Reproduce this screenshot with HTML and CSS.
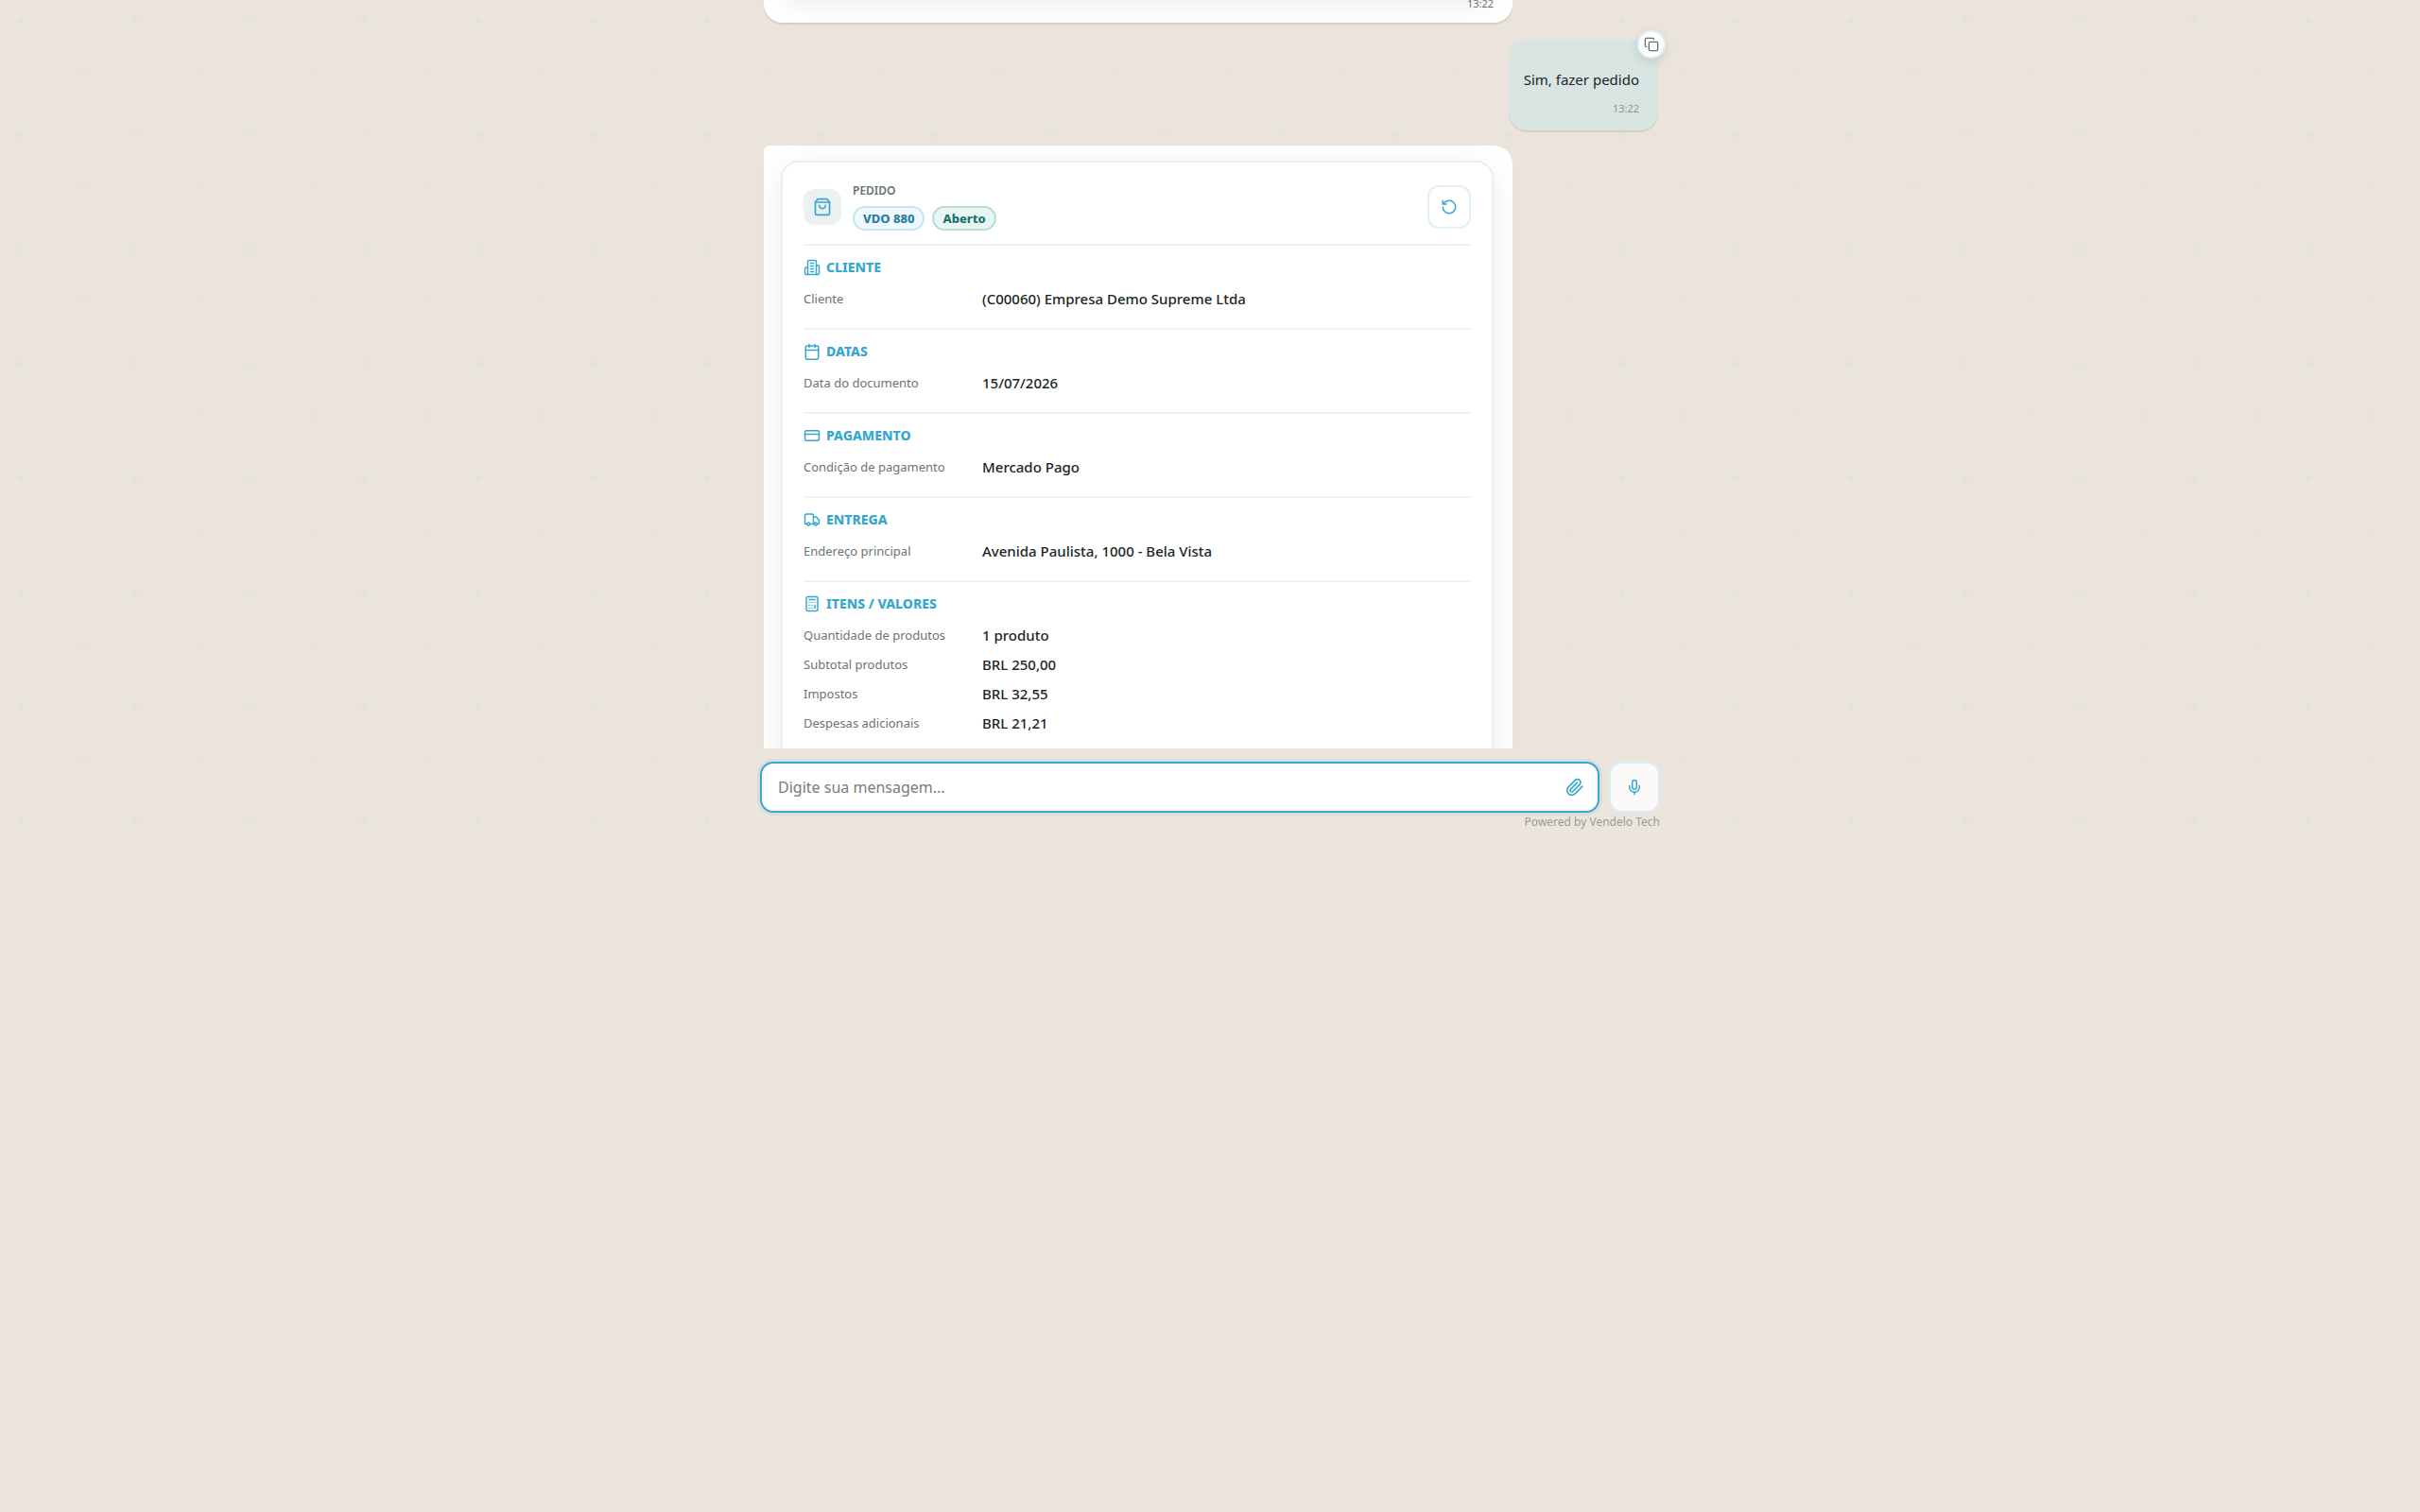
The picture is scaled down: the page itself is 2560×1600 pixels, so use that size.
FILE: index.html
```html
<!DOCTYPE html>
<html lang="pt-BR">
<head>
    <meta charset="UTF-8">
    <meta name="viewport" content="width=device-width, initial-scale=1.0">
    <title>Vendelo Chat</title>
    <link rel="stylesheet" href="styles.css">
</head>
<body>
    <div class="chat">
        <main class="messages">
            <article class="message bot previous">
                <div class="order-card"></div>
                <time class="time">13:22</time>
            </article>

            <article class="message user">
                <button class="copy-btn" type="button" aria-label="Copiar mensagem">
                    <svg class="icon" viewBox="0 0 24 24"><rect x="8" y="8" width="14" height="14" rx="2"/><path d="M4 16c-1.1 0-2-.9-2-2V4c0-1.1.9-2 2-2h10c1.1 0 2 .9 2 2"/></svg>
                </button>
                <p>Sim, fazer pedido</p>
                <time class="time">13:22</time>
            </article>

            <article class="message bot">
                <div class="order-card">
                    <header class="order-header">
                        <span class="order-icon">
                            <svg class="icon" viewBox="0 0 24 24"><path d="M6 2 3 6v14a2 2 0 0 0 2 2h14a2 2 0 0 0 2-2V6l-3-4Z"/><path d="M3 6h18"/><path d="M16 10a4 4 0 0 1-8 0"/></svg>
                        </span>
                        <div class="order-title">
                            <span class="order-label">PEDIDO</span>
                            <div class="badges">
                                <span class="badge">VDO 880</span>
                                <span class="badge status">Aberto</span>
                            </div>
                        </div>
                        <button class="refresh-btn" type="button" aria-label="Atualizar pedido">
                            <svg class="icon" viewBox="0 0 24 24"><path d="M3 12a9 9 0 1 0 9-9 9.750 9.750 0 0 0-6.740 2.740L3 8"/><path d="M3 3v5h5"/></svg>
                        </button>
                    </header>

                    <section class="order-section">
                        <h2>
                            <svg class="icon" viewBox="0 0 24 24"><path d="M6 22V4a2 2 0 0 1 2-2h8a2 2 0 0 1 2 2v18Z"/><path d="M6 12H4a2 2 0 0 0-2 2v6a2 2 0 0 0 2 2h2"/><path d="M18 9h2a2 2 0 0 1 2 2v9a2 2 0 0 1-2 2h-2"/><path d="M10 6h4M10 10h4M10 14h4M10 18h4"/></svg>
                            CLIENTE
                        </h2>
                        <dl>
                            <dt>Cliente</dt>
                            <dd>(C00060) Empresa Demo Supreme Ltda</dd>
                        </dl>
                    </section>

                    <section class="order-section">
                        <h2>
                            <svg class="icon" viewBox="0 0 24 24"><path d="M8 2v4M16 2v4"/><rect x="3" y="4" width="18" height="19" rx="2"/><path d="M3 10h18"/></svg>
                            DATAS
                        </h2>
                        <dl>
                            <dt>Data do documento</dt>
                            <dd>15/07/2026</dd>
                        </dl>
                    </section>

                    <section class="order-section">
                        <h2>
                            <svg class="icon" viewBox="0 0 24 24"><rect x="2" y="5" width="20" height="14" rx="2"/><path d="M2 10h20"/></svg>
                            PAGAMENTO
                        </h2>
                        <dl>
                            <dt>Condição de pagamento</dt>
                            <dd>Mercado Pago</dd>
                        </dl>
                    </section>

                    <section class="order-section">
                        <h2>
                            <svg class="icon" viewBox="0 0 24 24"><path d="M14 18V6a2 2 0 0 0-2-2H4a2 2 0 0 0-2 2v11a1 1 0 0 0 1 1h2"/><path d="M15 18H9"/><path d="M19 18h2a1 1 0 0 0 1-1v-3.650a1 1 0 0 0-.22-.624l-3.480-4.350A1 1 0 0 0 17.520 8H14"/><circle cx="17" cy="18" r="2"/><circle cx="7" cy="18" r="2"/></svg>
                            ENTREGA
                        </h2>
                        <dl>
                            <dt>Endereço principal</dt>
                            <dd>Avenida Paulista, 1000 - Bela Vista</dd>
                        </dl>
                    </section>

                    <section class="order-section">
                        <h2>
                            <svg class="icon" viewBox="0 0 24 24"><rect x="4" y="2" width="16" height="20" rx="2"/><path d="M8 6h8M16 14v4M16 10h.01M12 10h.01M8 10h.01M12 14h.01M8 14h.01M12 18h.01M8 18h.01"/></svg>
                            ITENS / VALORES
                        </h2>
                        <dl>
                            <dt>Quantidade de produtos</dt>
                            <dd>1 produto</dd>
                            <dt>Subtotal produtos</dt>
                            <dd>BRL 250,00</dd>
                            <dt>Impostos</dt>
                            <dd>BRL 32,55</dd>
                            <dt>Despesas adicionais</dt>
                            <dd>BRL 21,21</dd>
                        </dl>
                    </section>
                </div>
            </article>
        </main>

        <footer class="composer">
            <form class="composer-row">
                <div class="input-box">
                    <input type="text" placeholder="Digite sua mensagem..." aria-label="Mensagem">
                    <button class="attach-btn" type="button" aria-label="Anexar arquivo">
                        <svg class="icon" viewBox="0 0 24 24"><path d="m21.440 11.050-9.190 9.190a6 6 0 0 1-8.490-8.490l8.570-8.570A4 4 0 1 1 18 8.840l-8.590 8.570a2 2 0 0 1-2.830-2.830l8.490-8.480"/></svg>
                    </button>
                </div>
                <button class="mic-btn" type="button" aria-label="Gravar áudio">
                    <svg class="icon" viewBox="0 0 24 24"><path d="M12 2a3 3 0 0 0-3 3v7a3 3 0 0 0 6 0V5a3 3 0 0 0-3-3Z"/><path d="M19 10v2a7 7 0 0 1-14 0v-2"/><path d="M12 19v3"/></svg>
                </button>
            </form>
            <p class="powered">Powered by Vendelo Tech</p>
        </footer>
    </div>
</body>
</html>
```
FILE: styles.css
```css
* {
    box-sizing: border-box;
}

body {
    margin: 0;
    min-height: 100vh;
    background-color: #ebe4dd;
    font-family: "Segoe UI", "Noto Sans", "Open Sans", sans-serif;
    color: #1c2624;
}

p, h2, dl, dd {
    margin: 0;
}

button {
    display: flex;
    align-items: center;
    justify-content: center;
    padding: 0;
    cursor: pointer;
}

.icon {
    display: block;
    flex: none;
    width: 18px;
    height: 18px;
    fill: none;
    stroke: currentColor;
    stroke-width: 2;
    stroke-linecap: round;
    stroke-linejoin: round;
}

/* dotted wallpaper */
.chat {
    display: flex;
    flex-direction: column;
    height: 55vh;
    background-image:
        radial-gradient(circle at 22px 22px, #dfe3dc 2px, transparent 3px),
        radial-gradient(circle at 88px 77px, #e4e4dd 2px, transparent 3px);
    background-size: 121px 121px;
}

.messages {
    flex: 1;
    min-height: 0;
    width: 100%;
    max-width: 980px;
    margin: 0 auto;
    padding: 0 16px 0 18px;
    display: flex;
    flex-direction: column;
    overflow: hidden;
}

.message {
    flex: none;
    display: flex;
    flex-direction: column;
    border-radius: 20px;
    box-shadow: 0 2px 1px rgba(90, 80, 50, 0.14);
}

.message.bot {
    width: 100%;
    max-width: 792px;
    padding: 16px 20px 16px 18px;
    border-top-left-radius: 6px;
    background-color: #fff;
}

/* scrolled almost out of view */
.message.previous {
    margin-top: -80px;
    padding-bottom: 12px;
}

.message.previous .order-card {
    height: 60px;
}

.message.user {
    position: relative;
    align-self: flex-end;
    margin: 18px 0 16px;
    padding: 31px 20px 15px 16px;
    background-color: #d8e5e2;
}

.message.user p {
    font-size: 15px;
    line-height: 22px;
}

.message.user .time {
    margin-top: 12px;
    color: #8b9693;
}

.time {
    align-self: flex-end;
    font-size: 11px;
    line-height: 16px;
    color: #69716e;
}

.copy-btn {
    position: absolute;
    top: -10px;
    right: -8px;
    width: 30px;
    height: 30px;
    border: 2px solid #e3f1f7;
    border-radius: 50%;
    background-color: #fff;
    color: #66736c;
    box-shadow: 0 4px 12px rgba(0, 0, 0, 0.1);
}

.copy-btn .icon {
    width: 16px;
    height: 16px;
}

.order-card {
    padding: 0 22px 28px;
    border: 2px solid #e3f2f9;
    border-radius: 18px;
    background-color: #fff;
    box-shadow: 0 8px 32px rgba(0, 0, 0, 0.08);
}

.order-header {
    display: flex;
    align-items: center;
    gap: 12px;
    height: 86px;
    padding: 22px 0 14px;
}

.order-icon {
    display: flex;
    align-items: center;
    justify-content: center;
    width: 40px;
    height: 38px;
    border-radius: 12px;
    background-color: #eaf1f0;
    color: #38a6cf;
}

.order-icon .icon {
    width: 20px;
    height: 20px;
}

.order-title {
    flex: 1;
}

.order-label {
    display: block;
    font-size: 12px;
    line-height: 16px;
    font-weight: 600;
    color: #66736c;
}

.badges {
    display: flex;
    gap: 8px;
    margin-top: 8px;
}

.badge {
    height: 26px;
    padding: 0 9px;
    border: 2px solid #c5e4ef;
    border-radius: 13px;
    background-color: #eff8fc;
    font-size: 13px;
    line-height: 22px;
    font-weight: 800;
    color: #2a7ea5;
}

.badge.status {
    border-color: #b8dcd6;
    background-color: #e9f5f3;
    color: #17746a;
}

.refresh-btn {
    width: 46px;
    height: 46px;
    border: 2px solid #e0f0f7;
    border-radius: 12px;
    background-color: #fff;
    color: #38a6cf;
}

.order-section {
    padding: 12px 0 20px;
    border-top: 2px solid #ebf5f9;
}

.order-section h2 {
    display: flex;
    align-items: center;
    gap: 6px;
    font-size: 14px;
    line-height: 22px;
    font-weight: 800;
    color: #38a6cf;
}

.order-section dl {
    display: grid;
    grid-template-columns: 177px 1fr;
    column-gap: 12px;
    row-gap: 9px;
    margin-top: 11px;
    line-height: 22px;
}

.order-section dt {
    font-size: 13px;
    color: #6b7471;
}

.order-section dd {
    font-size: 15px;
    font-weight: 500;
}

.composer {
    flex: none;
    width: 100%;
    max-width: 980px;
    margin: 0 auto;
    padding: 14px 14px 0;
    background-color: #ece5de;
}

.composer-row {
    display: flex;
    gap: 10px;
}

.input-box {
    flex: 1;
    display: flex;
    align-items: center;
    height: 54px;
    padding: 0 14px 0 17px;
    border: 2px solid #38a6cf;
    border-radius: 14px;
    background-color: #fff;
    box-shadow: 0 0 0 3px #d8dedb;
}

.input-box input {
    flex: 1;
    min-width: 0;
    padding: 0;
    border: none;
    outline: none;
    background: none;
    font-family: inherit;
    font-size: 16px;
    color: #1c2624;
}

.input-box input::placeholder {
    color: #7b7b7b;
}

.attach-btn {
    border: none;
    background: none;
    color: #38a6cf;
}

.attach-btn .icon {
    width: 20px;
    height: 20px;
}

.mic-btn {
    width: 54px;
    height: 54px;
    border: 2px solid #dceef3;
    border-radius: 14px;
    background-color: #fbfaf9;
    color: #38a6cf;
}

.powered {
    font-size: 12px;
    line-height: 20px;
    text-align: right;
    color: #9a9c95;
}
```
